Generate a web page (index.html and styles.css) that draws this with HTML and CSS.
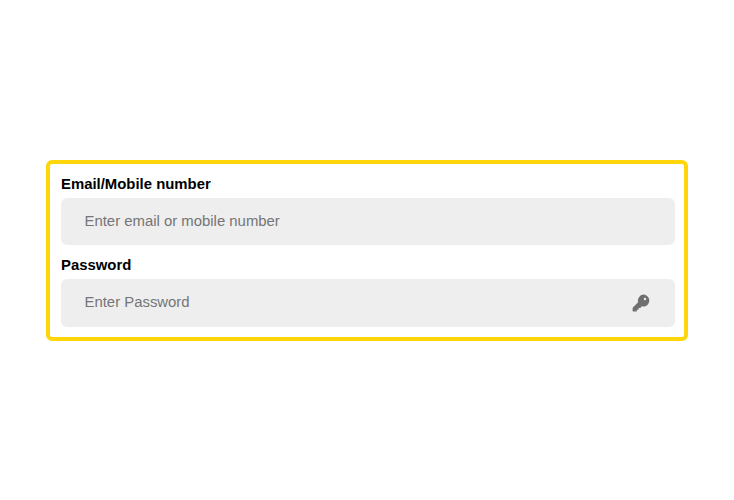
FILE: index.html
```html
<!DOCTYPE html>
<html lang="en">
<head>
  <meta charset="UTF-8" />
  <title>Login</title>
  <link rel="stylesheet" href="styles.css">
</head>
<body>
  <form class="login-box">
    <label class="field-label" for="email">Email/Mobile number</label>
    <div class="input-wrap">
      <input type="text" id="email" placeholder="Enter email or mobile number">
    </div>

    <label class="field-label" for="password">Password</label>
    <div class="input-wrap input-wrap-last">
      <input type="password" id="password" placeholder="Enter Password">
      <svg class="key-icon" viewBox="0 0 18 18" width="18" height="18" aria-hidden="true">
        <path fill-rule="evenodd" d="M11.4 0.6a6 6 0 0 1 1 11.9a6 6 0 0 1-2.6-0.2l-1.5 1.6H6.6v1.8H4.8v1.7H1.2a0.6 0.6 0 0 1-0.6-0.6v-2.6a1 1 0 0 1 0.3-0.7l5.2-5.3a6 6 0 0 1 5.3-7.6zM13 3.8a1.2 1.2 0 1 0 0 2.4a1.2 1.2 0 0 0 0-2.4z"/>
      </svg>
    </div>
  </form>
</body>
</html>
```

FILE: styles.css
```css
* { box-sizing: border-box; margin: 0; padding: 0; }
body {
  font-family: "Liberation Sans", Arial, sans-serif;
  background: #ffffff;
  color: #000000;
  height: 100vh;
  padding: 160px 46px 0;
}

.login-box {
  display: flex;
  flex-direction: column;
  height: 181px;
  padding: 12px 9px 0 11px;
  border: 4px solid #ffd60a;
  border-radius: 6px;
}

.field-label {
  display: block;
  height: 22px;
  flex-shrink: 0;
  font-size: 14.9px;
  line-height: 16px;
  font-weight: bold;
}

.input-wrap {
  position: relative;
  flex-shrink: 0;
  height: 47px;
  margin-bottom: 12px;
}
.input-wrap-last { height: 48px; margin-bottom: 0; }
.input-wrap input {
  width: 100%;
  height: 100%;
  padding: 0 24px 2px 23.5px;
  border: none;
  border-radius: 6px;
  background: #eeeeee;
  font-family: inherit;
  font-size: 14.9px;
  color: #333;
}
.input-wrap input::placeholder { color: #757575; opacity: 1; }

.key-icon {
  position: absolute;
  right: 25px;
  top: 15px;
  fill: #6f6f6f;
}
```
